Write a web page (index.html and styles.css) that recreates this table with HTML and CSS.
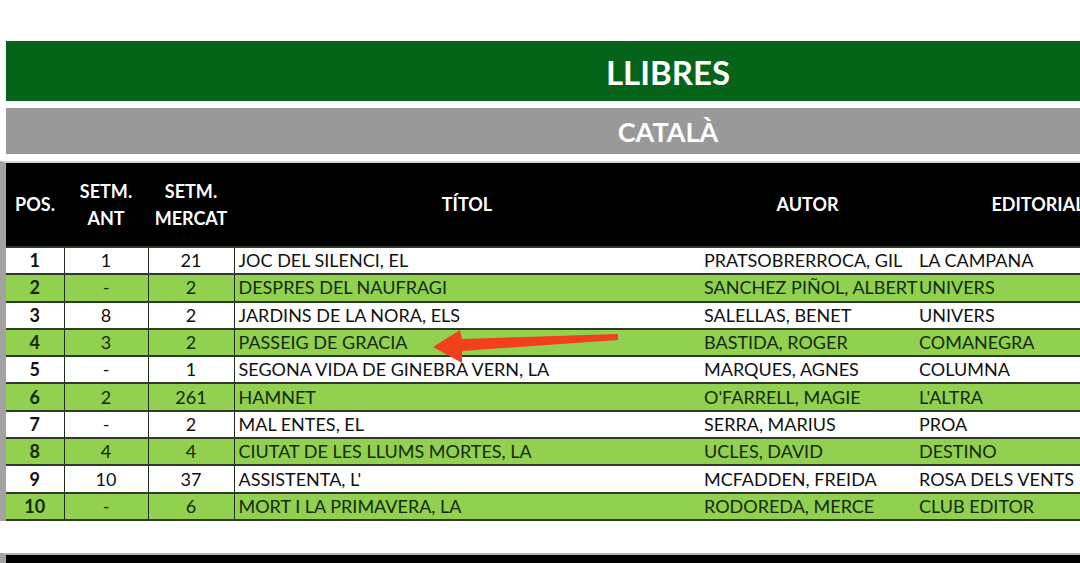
FILE: index.html
```html
<!DOCTYPE html>
<html lang="ca">
<head>
<meta charset="utf-8">
<title>Llibres - Català</title>
<link rel="stylesheet" href="styles.css">
</head>
<body>
<div class="page">
  <div class="title-bar">LLIBRES</div>
  <div class="sub-bar">CATALÀ</div>
  <div class="table-wrap">
    <table class="rank">
      <colgroup>
        <col class="c-pos"><col class="c-ant"><col class="c-merc"><col class="c-tit"><col class="c-aut"><col class="c-edi"><col class="c-rest">
      </colgroup>
      <thead>
        <tr>
          <th class="b">POS.</th>
          <th class="b">SETM.<br>ANT</th>
          <th class="b">SETM.<br>MERCAT</th>
          <th>TÍTOL</th>
          <th>AUTOR</th>
          <th>EDITORIAL</th>
          <th></th>
        </tr>
      </thead>
      <tbody>
        <tr><td class="pos b">1</td><td class="b">1</td><td class="b">21</td><td class="l tit">JOC DEL SILENCI, EL</td><td class="l">PRATSOBRERROCA, GIL</td><td class="l">LA CAMPANA</td><td></td></tr>
        <tr class="g"><td class="pos b">2</td><td class="b">-</td><td class="b">2</td><td class="l tit">DESPRES DEL NAUFRAGI</td><td class="l">SANCHEZ PIÑOL, ALBERT</td><td class="l">UNIVERS</td><td></td></tr>
        <tr><td class="pos b">3</td><td class="b">8</td><td class="b">2</td><td class="l tit">JARDINS DE LA NORA, ELS</td><td class="l">SALELLAS, BENET</td><td class="l">UNIVERS</td><td></td></tr>
        <tr class="g"><td class="pos b">4</td><td class="b">3</td><td class="b">2</td><td class="l tit">PASSEIG DE GRACIA</td><td class="l">BASTIDA, ROGER</td><td class="l">COMANEGRA</td><td></td></tr>
        <tr><td class="pos b">5</td><td class="b">-</td><td class="b">1</td><td class="l tit">SEGONA VIDA DE GINEBRA VERN, LA</td><td class="l">MARQUES, AGNES</td><td class="l">COLUMNA</td><td></td></tr>
        <tr class="g"><td class="pos b">6</td><td class="b">2</td><td class="b">261</td><td class="l tit">HAMNET</td><td class="l">O'FARRELL, MAGIE</td><td class="l">L'ALTRA</td><td></td></tr>
        <tr><td class="pos b">7</td><td class="b">-</td><td class="b">2</td><td class="l tit">MAL ENTES, EL</td><td class="l">SERRA, MARIUS</td><td class="l">PROA</td><td></td></tr>
        <tr class="g"><td class="pos b">8</td><td class="b">4</td><td class="b">4</td><td class="l tit">CIUTAT DE LES LLUMS MORTES, LA</td><td class="l">UCLES, DAVID</td><td class="l">DESTINO</td><td></td></tr>
        <tr><td class="pos b">9</td><td class="b">10</td><td class="b">37</td><td class="l tit">ASSISTENTA, L'</td><td class="l">MCFADDEN, FREIDA</td><td class="l">ROSA DELS VENTS</td><td></td></tr>
        <tr class="g"><td class="pos b">10</td><td class="b">-</td><td class="b">6</td><td class="l tit">MORT I LA PRIMAVERA, LA</td><td class="l">RODOREDA, MERCE</td><td class="l">CLUB EDITOR</td><td></td></tr>
      </tbody>
    </table>
    <svg class="arrow" width="200" height="40" viewBox="0 0 200 40" aria-hidden="true">
      <polygon points="0,18 27,1 29,10 185,5 185,11 29,22 29,34" fill="#f2401e"/>
    </svg>
  </div>
  <div class="bottom-bar"></div>
</div>
</body>
</html>
```
FILE: styles.css
```css
html, body {
  margin: 0;
  padding: 0;
  background: #ffffff;
  overflow: hidden;
}
.page {
  width: 1340px;
  padding-top: 41px;
  font-family: Lato, "Open Sans", "Liberation Sans", sans-serif;
}
.title-bar {
  margin-left: 6px;
  height: 60px;
  background: #05641a;
  color: #ffffff;
  font-weight: 700;
  font-size: 33px;
  line-height: 62px;
  text-align: center;
  width: 1324px;
}
.sub-bar {
  margin-left: 6px;
  margin-top: 7px;
  height: 46px;
  background: #999999;
  color: #ffffff;
  font-weight: 700;
  font-size: 27px;
  line-height: 48px;
  text-align: center;
  width: 1324px;
}
.table-wrap {
  position: relative;
  margin-top: 7px;
  border-top: 2px solid #d6d6d6;
  border-left: 6px solid #a2a2a2;
  width: 1324px;
}
.rank {
  border-collapse: collapse;
  table-layout: fixed;
  width: 1324px;
  font-size: 18px;
}
.c-pos { width: 58px; }
.c-ant { width: 84px; }
.c-merc { width: 86px; }
.c-tit { width: 466px; }
.c-aut { width: 215px; }
.c-edi { width: 246px; }
.c-rest { width: 169px; }
.rank thead th {
  background: #000000;
  color: #ffffff;
  font-weight: 700;
  font-size: 18px;
  line-height: 27px;
  height: 83px;
  padding: 0;
  text-align: center;
}
.rank td {
  height: 25.3px;
  padding: 0;
  line-height: 25px;
  text-align: center;
  color: #111111;
  background: #ffffff;
  border-top: 2px solid #2e3a2a;
  white-space: nowrap;
  overflow: visible;
}
.rank tbody tr:last-child td {
  border-bottom: 2px solid #2e3a2a;
}
.rank tr.g td {
  background: #92d050;
  color: #132a08;
}
.rank td.b {
  border-right: 1px solid #1e2a1a;
}
.rank td.pos {
  font-weight: 700;
}
.rank td.l {
  text-align: left;
  padding-left: 4px;
}
.rank td.tit {
  border-left: 1px solid #1e2a1a;
}
.arrow {
  position: absolute;
  left: 427px;
  top: 166px;
}
.bottom-bar {
  margin-top: 32px;
  border-top: 2px solid #b5b5b5;
  border-left: 6px solid #a2a2a2;
  height: 20px;
  background: #000000;
}
```
